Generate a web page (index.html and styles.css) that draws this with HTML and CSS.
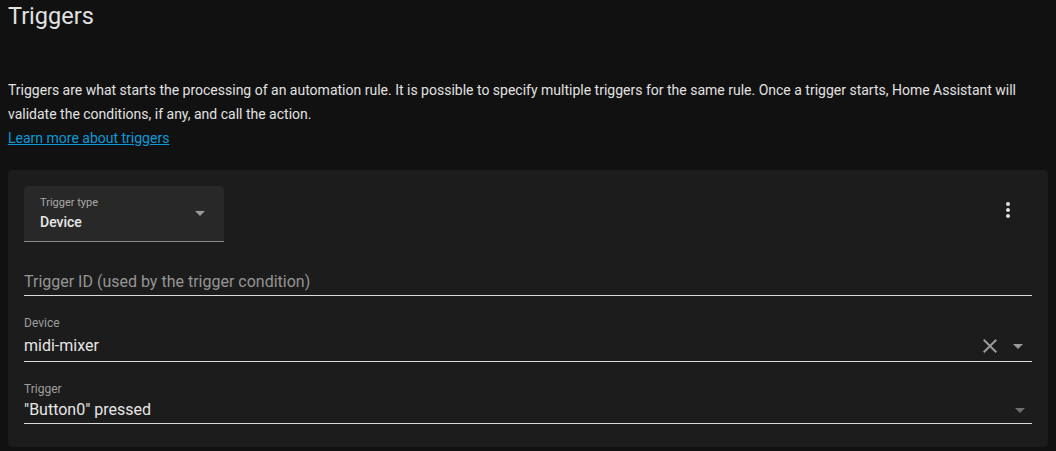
FILE: index.html
```html
<!DOCTYPE html>
<html lang="en">
<head>
<meta charset="utf-8">
<title>Triggers</title>
<link rel="stylesheet" href="styles.css">
</head>
<body>
<main class="page">
  <h1 class="title">Triggers</h1>
  <p class="intro">Triggers are what starts the processing of an automation rule. It is possible to specify multiple triggers for the same rule. Once a trigger starts, Home Assistant will validate the conditions, if any, and call the action.<br><a class="link" href="#">Learn more about triggers</a></p>
  <section class="card">
    <div class="card-head">
      <div class="select">
        <div class="select-text">
          <div class="select-label">Trigger type</div>
          <div class="select-value">Device</div>
        </div>
        <svg class="icon" viewBox="0 0 24 24"><path d="M7,10L12,15L17,10H7Z"/></svg>
      </div>
      <button class="icon-btn" aria-label="menu">
        <svg class="icon icon-light" viewBox="0 0 24 24"><path d="M12,16A2,2 0 0,1 14,18A2,2 0 0,1 12,20A2,2 0 0,1 10,18A2,2 0 0,1 12,16M12,10A2,2 0 0,1 14,12A2,2 0 0,1 12,14A2,2 0 0,1 10,12A2,2 0 0,1 12,10M12,4A2,2 0 0,1 14,6A2,2 0 0,1 12,8A2,2 0 0,1 10,6A2,2 0 0,1 12,4Z"/></svg>
      </button>
    </div>
    <div class="field field-id">
      <div class="placeholder">Trigger ID (used by the trigger condition)</div>
    </div>
    <div class="field field-combo">
      <div class="field-label">Device</div>
      <div class="field-row">
        <span class="field-value">midi-mixer</span>
        <svg class="icon" viewBox="0 0 24 24"><path d="M19,6.41L17.59,5L12,10.59L6.41,5L5,6.41L10.59,12L5,17.59L6.41,19L12,13.41L17.59,19L19,17.59L13.41,12L19,6.41Z"/></svg>
        <svg class="icon" viewBox="0 0 24 24"><path d="M7,10L12,15L17,10H7Z"/></svg>
      </div>
    </div>
    <div class="field field-select">
      <div class="field-label">Trigger</div>
      <div class="field-row">
        <span class="field-value">"Button0" pressed</span>
        <svg class="icon icon-dim" viewBox="0 0 24 24"><path d="M7,10L12,15L17,10H7Z"/></svg>
      </div>
    </div>
  </section>
</main>
</body>
</html>
```

FILE: styles.css
```css
* { box-sizing: border-box; }
html, body {
  margin: 0;
  background: #111111;
  color: #e1e1e1;
  font-family: Roboto, "Noto Sans", sans-serif;
}
.page {
  padding: 0 8px;
}
.title {
  margin: 0;
  font-size: 23.5px;
  line-height: 32px;
  font-weight: 400;
  color: #e1e1e1;
}
.intro {
  margin: 46px 0 0;
  font-size: 14px;
  line-height: 24px;
  color: #e1e1e1;
}
.link {
  color: #0a9ad8;
  text-decoration: underline;
}
.card {
  margin-top: 20px;
  background: #1c1c1c;
  border-radius: 4px;
  padding: 16px 16px 23px;
}
.card-head {
  display: flex;
  justify-content: space-between;
  align-items: flex-start;
}
.select {
  width: 200px;
  height: 56px;
  background: #282828;
  border-radius: 4px 4px 0 0;
  border-bottom: 1px solid #8c8c8c;
  padding: 9px 12px 0 16px;
  display: flex;
  align-items: flex-start;
}
.select-text {
  flex: 1;
}
.select-label {
  font-size: 11px;
  line-height: 16px;
  color: #a8a8a8;
}
.select-value {
  font-size: 14px;
  line-height: 20px;
  font-weight: 500;
  color: #e8e8e8;
  margin-top: 1px;
}
.select .icon {
  margin-top: 6px;
}
.icon {
  width: 24px;
  height: 24px;
  flex: none;
  fill: #9a9a9a;
}
.icon-light { fill: #e1e1e1; }
.icon-dim { fill: #6f6f6f; }
.icon-btn {
  width: 48px;
  height: 48px;
  border: 0;
  padding: 12px;
  background: transparent;
  display: flex;
}
.field {
  border-bottom: 1px solid #dcdcdc;
}
.field-id {
  padding: 28px 0 1px;
}
.placeholder {
  font-size: 16px;
  line-height: 24px;
  color: #959595;
}
.field-combo {
  padding: 19px 2px 3px 0;
}
.field-select {
  padding: 19px 0 1px 0;
}
.field-label {
  font-size: 12px;
  line-height: 16px;
  color: #9e9e9e;
  margin-bottom: 3px;
}
.field-select .field-label {
  margin-bottom: 1px;
}
.field-row {
  display: flex;
  align-items: center;
  gap: 4px;
  height: 24px;
}
.field-value {
  flex: 1;
  font-size: 16px;
  line-height: 24px;
  color: #e6e6e6;
}
```
